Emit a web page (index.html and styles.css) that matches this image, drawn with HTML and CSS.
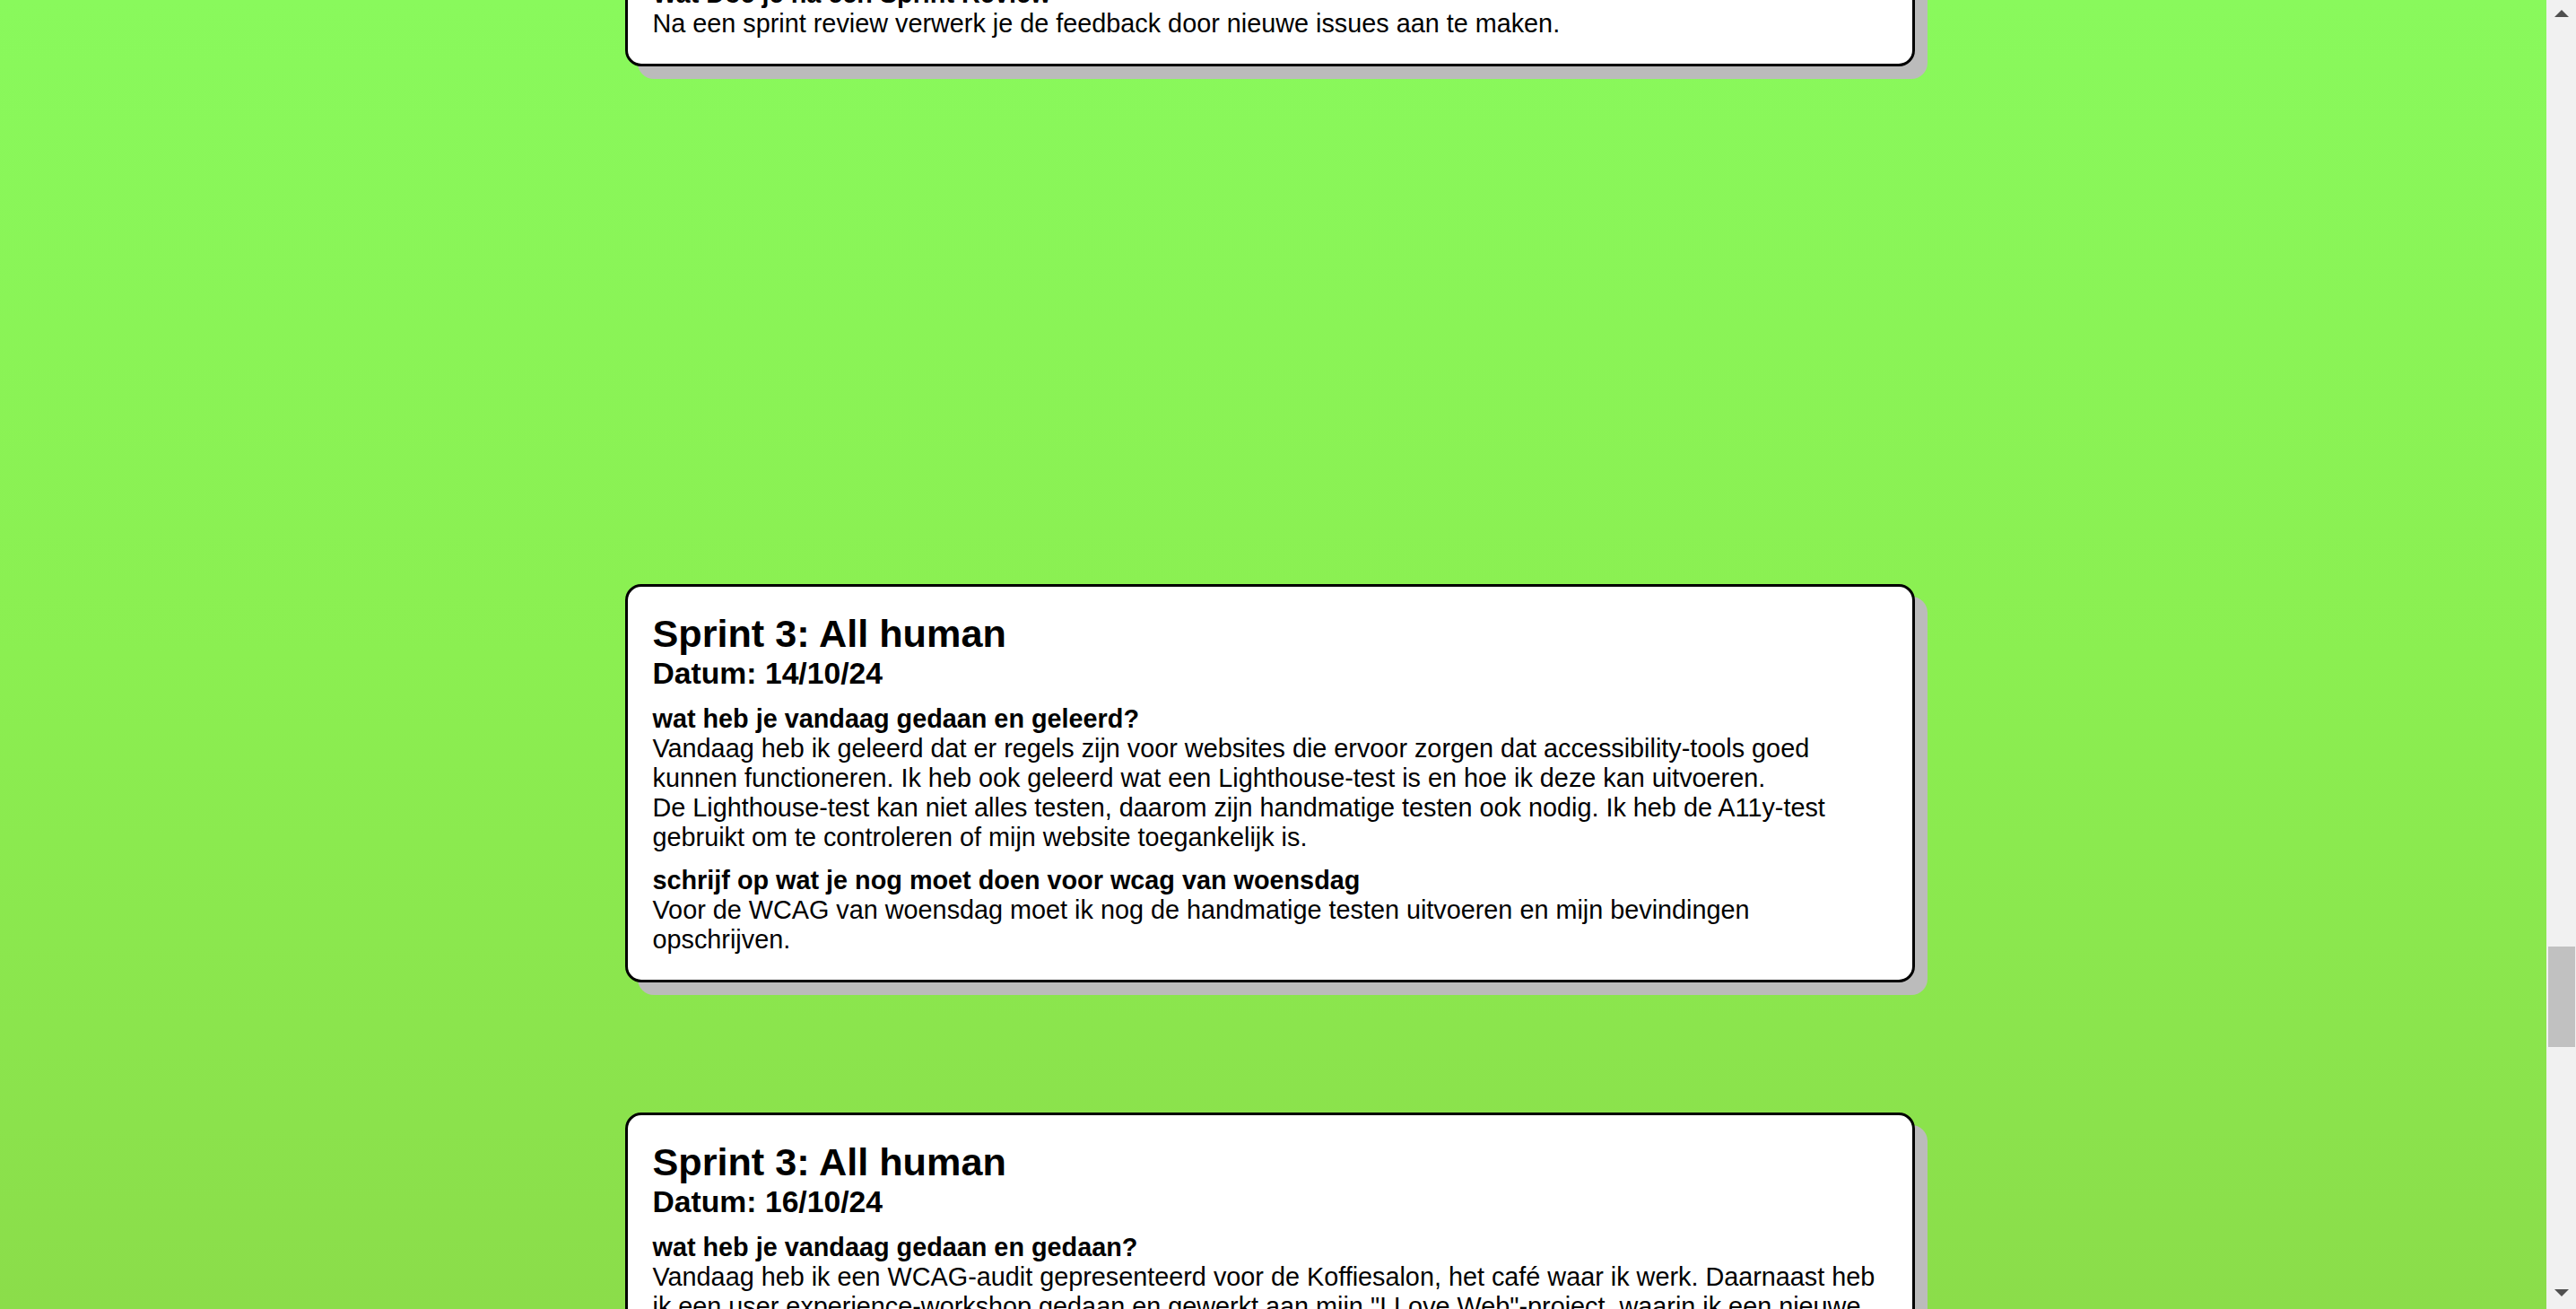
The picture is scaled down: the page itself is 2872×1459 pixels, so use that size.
FILE: index.html
```html
<!DOCTYPE html>
<html lang="nl">
<head>
<meta charset="utf-8">
<title>Leerjournaal</title>
<link rel="stylesheet" href="styles.css">
</head>
<body>
<div class="page">
  <main class="journal">
    <article class="entry entry--cut">
      <section class="entry-part">
        <h4 class="question">Wat Doe je na een Sprint Review</h4>
        <p class="answer">Na een sprint review verwerk je de feedback door nieuwe issues aan te maken.</p>
      </section>
    </article>

    <article class="entry">
      <h2 class="entry-title">Sprint 3: All human</h2>
      <h3 class="entry-date">Datum: 14/10/24</h3>
      <section class="entry-part">
        <h4 class="question">wat heb je vandaag gedaan en geleerd?</h4>
        <p class="answer">Vandaag heb ik geleerd dat er regels zijn voor websites die ervoor zorgen dat accessibility-tools goed kunnen functioneren. Ik heb ook geleerd wat een Lighthouse-test is en hoe ik deze kan uitvoeren.<br>De Lighthouse-test kan niet alles testen, daarom zijn handmatige testen ook nodig. Ik heb de A11y-test gebruikt om te controleren of mijn website toegankelijk is.</p>
      </section>
      <section class="entry-part">
        <h4 class="question">schrijf op wat je nog moet doen voor wcag van woensdag</h4>
        <p class="answer">Voor de WCAG van woensdag moet ik nog de handmatige testen uitvoeren en mijn bevindingen opschrijven.</p>
      </section>
    </article>

    <article class="entry">
      <h2 class="entry-title">Sprint 3: All human</h2>
      <h3 class="entry-date">Datum: 16/10/24</h3>
      <section class="entry-part">
        <h4 class="question">wat heb je vandaag gedaan en gedaan?</h4>
        <p class="answer">Vandaag heb ik een WCAG-audit gepresenteerd voor de Koffiesalon, het café waar ik werk. Daarnaast heb ik een user experience-workshop gedaan en gewerkt aan mijn "I Love Web"-project, waarin ik een nieuwe pagina heb gemaakt.</p>
      </section>
    </article>
  </main>

  <div class="scrollbar" aria-hidden="true">
    <div class="scroll-btn">
      <svg width="16" height="8" viewBox="0 0 16 8"><path d="M8 0 L16 8 H0 Z" fill="#505050"/></svg>
    </div>
    <div class="scroll-track">
      <div class="scroll-thumb"></div>
    </div>
    <div class="scroll-btn scroll-btn--down">
      <svg width="16" height="8" viewBox="0 0 16 8"><path d="M0 0 H16 L8 8 Z" fill="#505050"/></svg>
    </div>
  </div>
</div>
</body>
</html>
```

FILE: styles.css
```css
html, body {
  margin: 0;
  padding: 0;
  height: 100%;
  overflow: hidden;
}

body {
  font-family: "Liberation Sans", Arial, sans-serif;
  font-size: 28.8px;
  color: #000;
}

.page {
  display: flex;
  height: 100vh;
  background: linear-gradient(to bottom, #89f95c 0%, #8bef51 50%, #8bdd4a 100%);
}

.journal {
  flex: 1;
  min-width: 0;
  overflow: hidden;
  display: flex;
  flex-direction: column;
  align-items: center;
  padding-right: 8px;
}

.entry {
  box-sizing: border-box;
  width: 1438px;
  flex: none;
  background: #fff;
  border: 3px solid #000;
  border-radius: 18px;
  box-shadow: 14px 14px 0 #bbbbbb;
  padding: 28px;
  margin-bottom: 145px;
}

.entry--cut {
  margin-top: -54px;
  margin-bottom: 577px;
}

.entry-title {
  margin: 0;
  font-size: 43.2px;
  font-weight: bold;
  line-height: normal;
}

.entry-date {
  margin: 0;
  font-size: 33.7px;
  font-weight: bold;
  line-height: normal;
}

.entry-part {
  margin-top: 15px;
}

.entry-part:first-child {
  margin-top: 0;
}

.question {
  margin: 0;
  font-size: 28.8px;
  font-weight: bold;
  line-height: 33px;
}

.answer {
  margin: 0;
  font-size: 28.8px;
  line-height: 33px;
}

.scrollbar {
  width: 33px;
  flex: none;
  display: flex;
  flex-direction: column;
  background: #f1f1f1;
}

.scroll-btn {
  height: 30px;
  display: flex;
  justify-content: center;
  align-items: flex-start;
  padding-top: 11px;
  box-sizing: border-box;
}

.scroll-btn--down {
  align-items: flex-end;
  padding-top: 0;
  padding-bottom: 14px;
}

.scroll-track {
  flex: 1;
  display: flex;
  flex-direction: column;
}

.scroll-thumb {
  margin: 1025px 1px 0 2px;
  height: 112px;
  background: #c1c1c1;
}
```
